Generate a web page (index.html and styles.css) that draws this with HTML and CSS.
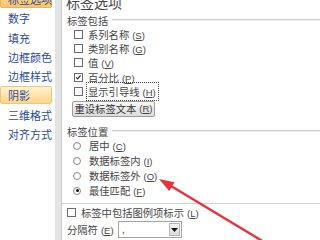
FILE: index.html
```html
<!DOCTYPE html>
<html lang="zh-CN">
<head>
<meta charset="utf-8">
<title>设置数据标签格式</title>
<link rel="stylesheet" href="styles.css">
</head>
<body>
<div class="window">
  <nav class="sidebar">
    <div class="nav-item selected">标签选项</div>
    <div class="nav-item">数字</div>
    <div class="nav-item">填充</div>
    <div class="nav-item">边框颜色</div>
    <div class="nav-item">边框样式</div>
    <div class="nav-item hover">阴影</div>
    <div class="nav-item">三维格式</div>
    <div class="nav-item">对齐方式</div>
  </nav>
  <div class="divider"></div>
  <main class="panel">
    <div class="title">标签选项</div>

    <div class="group-head"><span>标签包括</span><span class="rule"></span></div>
    <div class="opt"><span class="box"></span><span>系列名称<span class="key">(<u>S</u>)</span></span></div>
    <div class="opt"><span class="box"></span><span>类别名称<span class="key">(<u>G</u>)</span></span></div>
    <div class="opt"><span class="box"></span><span>值<span class="key">(<u>V</u>)</span></span></div>
    <div class="opt"><span class="box"><svg viewBox="0 0 9 9" width="9" height="9"><polyline points="1.5,4.2 3.4,6.3 7.2,1.8" fill="none" stroke="#222" stroke-width="1.3"/></svg></span><span>百分比<span class="key">(<u>P</u>)</span></span></div>
    <div class="opt"><span class="box"></span><span class="focus">显示引导线<span class="key">(<u>H</u>)</span></span></div>
    <div class="btn">重设标签文本<span class="key">(<u>R</u>)</span></div>

    <div class="group-head second"><span>标签位置</span><span class="rule"></span></div>
    <div class="radio-row"><span class="radio"></span><span>居中<span class="key">(<u>C</u>)</span></span></div>
    <div class="radio-row"><span class="radio"></span><span>数据标签内<span class="key">(<u>I</u>)</span></span></div>
    <div class="radio-row"><span class="radio"></span><span>数据标签外<span class="key">(<u>O</u>)</span></span></div>
    <div class="radio-row"><span class="radio on"></span><span>最佳匹配<span class="key">(<u>F</u>)</span></span></div>

    <div class="sep"></div>
    <div class="opt flush"><span class="box"></span><span>标签中包括图例项标示<span class="key">(<u>L</u>)</span></span></div>
    <div class="field-row">
      <span class="field-label">分隔符<span class="key">(<u>E</u>)</span></span>
      <div class="combo"><span class="combo-text">,</span><span class="combo-btn"><svg viewBox="0 0 7 4" width="7" height="4"><polygon points="0,0 7,0 3.5,4" fill="#111"/></svg></span></div>
    </div>
  </main>
  <svg class="arrow" viewBox="0 0 320 240" width="320" height="240">
    <line x1="264" y1="242" x2="171" y2="186" stroke="#e8323c" stroke-width="2.4"/>
    <polygon points="159,179 174.5,182.2 169.2,191" fill="#e8323c"/>
  </svg>
</div>
</body>
</html>
```
FILE: styles.css
```css
html, body {
  margin: 0;
  padding: 0;
  width: 320px;
  height: 240px;
  overflow: hidden;
  background: #fff;
}
body {
  font-family: "Noto Sans CJK SC", "Noto Sans", sans-serif;
}
.window {
  position: relative;
  display: flex;
  width: 320px;
  height: 240px;
  overflow: hidden;
}
.sidebar {
  width: 55px;
  flex: none;
  display: flex;
  flex-direction: column;
  margin-top: -10px;
  background: #fff;
}
.nav-item {
  height: 18px;
  margin-bottom: 1.3px;
  margin-right: 3px;
  box-sizing: border-box;
  border: 1px solid transparent;
  border-radius: 2px;
  padding-left: 7px;
  display: flex;
  align-items: center;
  font-size: 11px;
  color: #2d4b98;
  white-space: nowrap;
}
.nav-item.selected {
  background: linear-gradient(#fde3a6, #f8c465);
  border-color: #eab35a;
}
.nav-item.hover {
  background: linear-gradient(#fff3d4, #fcd58a);
  border-color: #f1c776;
}
.divider {
  width: 6px;
  flex: none;
  background: #e3e3e3;
  border-right: 1px solid #cbcbcb;
}
.panel {
  flex: 1;
  display: flex;
  flex-direction: column;
  padding-left: 4px;
  font-size: 10.3px;
  color: #444;
  background: #fff;
  white-space: nowrap;
}
.title {
  font-size: 14px;
  line-height: 16px;
  height: 16px;
  margin-top: -6px;
  color: #444;
}
.group-head {
  height: 14px;
  margin-top: 3px;
  padding-left: 1px;
  display: flex;
  align-items: center;
  color: #444;
}
.group-head.second {
  margin-top: 7.5px;
}
.rule {
  flex: 1;
  height: 0;
  margin-left: 4px;
  margin-top: -1px;
  border-top: 1px solid #cdcdcd;
  border-bottom: 1px solid #f0f0f0;
}
.key {
  font-family: "Liberation Sans", sans-serif;
  font-size: 9.5px;
  margin-left: 3px;
  color: #444;
}
.opt {
  height: 14.4px;
  display: flex;
  align-items: center;
  padding-left: 8px;
}
.opt.flush {
  height: 14px;
  padding-left: 1px;
  margin-top: 2px;
}
.box {
  width: 9px;
  height: 9px;
  flex: none;
  box-sizing: border-box;
  border: 1px solid #6a6a6a;
  background: #fff;
  margin-right: 5px;
  display: flex;
  align-items: center;
  justify-content: center;
  overflow: hidden;
}
.box svg {
  display: block;
}
.focus {
  outline: 1px dotted #444;
  outline-offset: 1px;
  padding: 0 1px 0 0;
}
.btn {
  align-self: flex-start;
  margin: 2px 0 0 6px;
  width: 83px;
  height: 16px;
  box-sizing: border-box;
  border: 1px solid #9d9d9d;
  border-radius: 2px;
  background: linear-gradient(#f6f6f6, #dcdcdc);
  display: flex;
  align-items: center;
  justify-content: center;
  color: #333;
}
.radio-row {
  height: 15px;
  display: flex;
  align-items: center;
  padding-left: 7px;
}
.radio {
  width: 8px;
  height: 8px;
  flex: none;
  box-sizing: border-box;
  border: 1px solid #8c8c8c;
  border-radius: 50%;
  background: radial-gradient(circle at 60% 60%, #fff 40%, #e6e6e6 100%);
  margin-right: 8px;
  display: flex;
  align-items: center;
  justify-content: center;
}
.radio.on::after {
  content: "";
  width: 3px;
  height: 3px;
  border-radius: 50%;
  background: #111;
}
.sep {
  margin-top: 4.5px;
  margin-left: -4px;
  height: 0;
  border-top: 1px solid #d4d4d4;
}
.field-row {
  margin-top: 1.5px;
  height: 17px;
  display: flex;
  align-items: center;
  padding-left: 1px;
}
.field-label {
  width: 51px;
  flex: none;
}
.combo {
  width: 64px;
  height: 17px;
  box-sizing: border-box;
  border: 1px solid #a3a3a3;
  background: #fff;
  display: flex;
  align-items: center;
}
.combo-text {
  flex: 1;
  padding-left: 3px;
  font-family: "Liberation Sans", sans-serif;
  font-size: 10px;
  line-height: 10px;
  color: #333;
}
.combo-btn {
  width: 11px;
  height: 13px;
  margin-right: 1px;
  box-sizing: border-box;
  border: 1px solid #b4b4b4;
  background: linear-gradient(#f4f4f4, #dadada);
  display: flex;
  align-items: center;
  justify-content: center;
}
.combo-btn svg {
  display: block;
}
.arrow {
  position: absolute;
  left: 0;
  top: 0;
  pointer-events: none;
}
```
